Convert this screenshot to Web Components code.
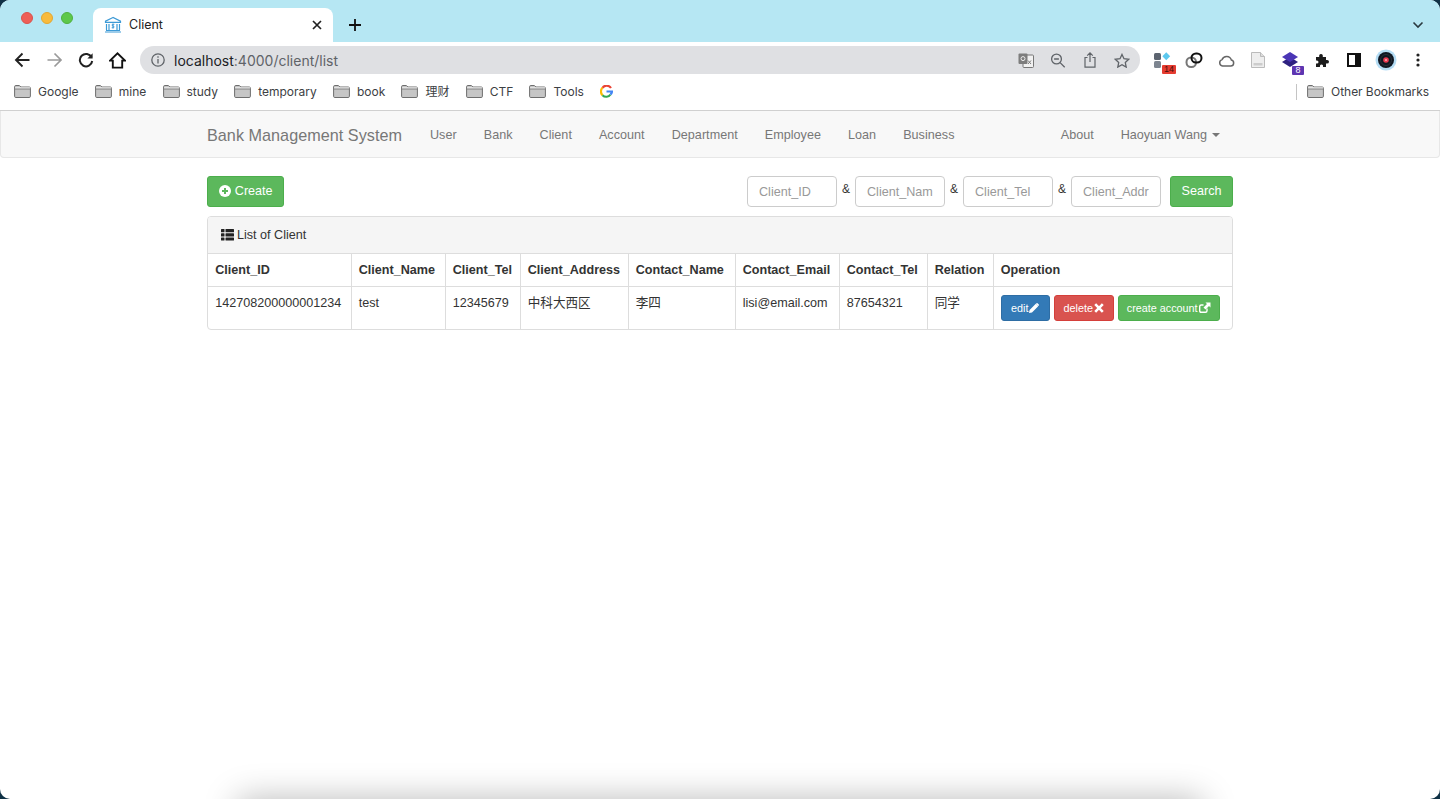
<!DOCTYPE html>
<html lang="en">
<head>
<meta charset="utf-8">
<title>Client</title>
<style>
    html, body { margin: 0; height: 100%; background: #0f3145; }
    body { font-family: "Liberation Sans", "Noto Sans CJK SC", sans-serif; overflow: hidden; }
    #window {
        position: relative;
        height: 799px;
        background: #fff;
        border-radius: 10px;
        overflow: hidden;
    }
    #shade {
        position: absolute;
        left: 238px;
        width: 964px;
        top: 799px;
        height: 40px;
        box-shadow: 0 0 34px rgba(0, 0, 0, .28);
    }
</style>
</head>
<body>
<div id="window">
    <browser-tabs></browser-tabs>
    <browser-toolbar></browser-toolbar>
    <browser-bookmarks></browser-bookmarks>
    <bank-navbar></bank-navbar>
    <client-page>
        <client-filter></client-filter>
        <client-panel></client-panel>
    </client-page>
    <div id="shade"></div>
</div>
<script>
    function html(strings, ...values) {
        return String.raw({ raw: strings }, ...values);
    }

    function createTemplate(s) {
        const template = document.createElement("template");
        template.innerHTML = s;
        return template;
    }

    class BaseElement extends HTMLElement {
        static template = createTemplate("");

        constructor() {
            super();
            const root = this.attachShadow({ mode: "open" });
            root.appendChild(this.constructor.template.content.cloneNode(true));
        }
    }

    const chromeFont = `Inter, "Noto Sans CJK SC", sans-serif`;

    const folderIcon = html`<svg width="17" height="13" viewBox="0 0 17 13"><path d="M.6 1.700q0-1.200 1.200-1.200h3.600l1.500 1.500h8.300q1.200 0 1.200 1.200v8.100q0 1.200-1.200 1.200H1.800q-1.200 0-1.200-1.200z" fill="#c6c6c6" stroke="#6e6e6e"/><path d="M1 3.900h15" stroke="#6e6e6e" fill="none"/><path d="M1 2.900h15" stroke="#f4f4f4" fill="none"/></svg>`;

    // ***** BROWSER CHROME *****

    class BrowserTabs extends BaseElement {
        static template = createTemplate(html`
        <style>
            :host {
                display: flex;
                align-items: flex-end;
                height: 42px;
                background: #b6e7f3;
                position: relative;
                font: 12.500px ${chromeFont};
                color: #222;
            }
            #lights { display: flex; gap: 8px; padding: 0 0 18px 21px; width: 72px; box-sizing: border-box; }
            #lights i { width: 12px; height: 12px; border-radius: 50%; box-sizing: border-box; flex: none; }
            #tab {
                display: flex;
                align-items: center;
                width: 240px;
                height: 34px;
                background: #fff;
                border-radius: 8px 8px 0 0;
                margin-left: 21px;
                padding: 0 10px 0 11px;
                box-sizing: border-box;
            }
            #tab svg:first-child { margin-right: 7px; }
            #title { flex: 1; position: relative; top: -1px; }
            #plus { margin: 0 0 10px 15px; }
            #more { position: absolute; right: 16px; top: 21px; }
        </style>
        <div id="lights">
            <i style="background:#ee5f57;border:1px solid #d9534c"></i>
            <i style="background:#f9bb3c;border:1px solid #e3a731"></i>
            <i style="background:#5ec84a;border:1px solid #50b03f"></i>
        </div>
        <div id="tab">
            <svg width="18" height="18" viewBox="0 0 18 18" fill="none" stroke="#3d9ad6" stroke-width="1.200"><path d="M9 1.500 1.500 5.200v1.200h15V5.200zM2.500 8v6M15.500 8v6M5 8v6M13 8v6M1 16h16M2 14.500h14"/><path d="M10.400 8.300H8.300v1.700h1.500v1.700H7.700M9 7.600v5" stroke-width=".9"/></svg>
            <span id="title">Client</span>
            <svg width="12" height="12" viewBox="0 0 12 12" stroke="#222" stroke-width="1.700"><path d="M2 2l8 8M10 2l-8 8"/></svg>
        </div>
        <svg id="plus" width="14" height="14" viewBox="0 0 14 14" stroke="#111" stroke-width="1.800"><path d="M7 1v12M1 7h12"/></svg>
        <svg id="more" width="12" height="8" viewBox="0 0 12 8" fill="none" stroke="#2a3a40" stroke-width="1.600"><path d="M1.500 1.500 6 6l4.500-4.500"/></svg>
        `);
    }
    customElements.define("browser-tabs", BrowserTabs);

    class BrowserToolbar extends BaseElement {
        static template = createTemplate(html`
        <style>
            :host {
                display: flex;
                align-items: center;
                height: 34px;
                background: #fff;
                box-sizing: border-box;
                padding: 2px 0 0 14px;
            }
            #nav { display: flex; align-items: center; gap: 15px; width: 126px; flex: none; }
            #omni {
                display: flex;
                align-items: center;
                width: 1000px;
                flex: none;
                height: 28px;
                background: #dfe0e3;
                border-radius: 14px;
                padding: 0 10px 0 11px;
                box-sizing: border-box;
                font: 14px ${chromeFont};
                color: #5f6368;
            }
            #url { flex: 1; margin-left: 9px; }
            #url b { font-weight: normal; color: #202124; }
            #omni-icons { display: flex; align-items: center; gap: 16px; }
            #omni-icons svg { width: 16px; }
            #ext { display: flex; align-items: center; margin-left: 6px; }
            .slot { width: 32px; display: flex; justify-content: center; position: relative; }
            .badge {
                position: absolute;
                font: 9px/9px "Liberation Sans", sans-serif;
                text-align: center;
                border-radius: 1px;
            }
        </style>
        <div id="nav">
            <svg width="17" height="16" viewBox="0 0 17 16" fill="none" stroke="#222" stroke-width="1.900"><path d="M15.500 8H2M8.500 1.500 2 8l6.500 6.500"/></svg>
            <svg width="17" height="16" viewBox="0 0 17 16" fill="none" stroke="#9a9a9a" stroke-width="1.700"><path d="M1.500 8H15M8.500 1.500 15 8l-6.500 6.500"/></svg>
            <svg width="16" height="16" viewBox="0 0 16 16" fill="none" stroke="#222" stroke-width="2"><path d="M13.600 5.400A6.200 6.200 0 1 0 14.200 9"/><path d="M14.600 1.200v5.200H9.400z" fill="#222" stroke="none"/></svg>
            <svg width="17" height="17" viewBox="0 0 17 17" fill="#fff" stroke="#111" stroke-width="1.900"><path d="M1 8.600 8.500 1.400 16 8.600h-2.800v7H3.800v-7z"/></svg>
        </div>
        <div id="omni">
            <svg width="14" height="14" viewBox="0 0 14 14" fill="none" stroke="#5f6368" stroke-width="1.300"><circle cx="7" cy="7" r="6.200"/><path d="M7 6v4.400M7 3.200v1.500"/></svg>
            <span id="url"><b>localhost</b>:4000/client/list</span>
            <div id="omni-icons">
                <svg height="15" viewBox="0 0 16 15"><rect x="5" y="2" width="10.500" height="12.500" rx="1" fill="#f1f1f1" stroke="#777"/><rect x=".5" y=".5" width="9" height="10.500" rx="1" fill="#7d7d7d"/><circle cx="5" cy="5.600" r="2" fill="none" stroke="#eee"/><path d="M10 7.500l3 3.500M13 7.500l-3 3.500" stroke="#777"/></svg>
                <svg height="15" viewBox="0 0 15 15" fill="none" stroke="#5f6368" stroke-width="1.300"><circle cx="6" cy="6" r="4.900"/><path d="M3.600 6h4.800M9.600 9.600l4.600 4.600"/></svg>
                <svg height="16" viewBox="0 0 14 16" fill="none" stroke="#5f6368" stroke-width="1.200"><path d="M4.500 5.500H2v9.700h10V5.500H9.500M7 10V1M4.200 3.600 7 .9l2.800 2.700"/></svg>
                <svg height="15" viewBox="0 0 16 15" fill="none" stroke="#5f6368" stroke-width="1.300"><path d="m8 1.400 2 4.300 4.700.6-3.400 3.200.9 4.600L8 11.800l-4.200 2.300.9-4.600L1.300 6.300 6 5.700z"/></svg>
            </div>
        </div>
        <div id="ext">
            <div class="slot">
                <svg width="20" height="20" viewBox="0 0 20 20"><rect x="2" y="3" width="7" height="7" rx="1.500" fill="#5c6470"/><rect x="2" y="11" width="7" height="7" rx="1.500" fill="#7d8590"/><rect x="11.500" y="3.500" width="5.500" height="5.500" transform="rotate(45 14.250 6.250)" fill="#5cc8ee"/></svg>
                <span class="badge" style="left:16px;top:15px;width:14px;background:#e53b30;color:#4a0f0a">14</span>
            </div>
            <div class="slot">
                <svg width="18" height="16" viewBox="0 0 18 16" fill="none" stroke-width="2"><rect x="1.500" y="5.500" width="9.500" height="9.500" rx="4.500" stroke="#777"/><rect x="6.500" y="1.500" width="10" height="9" rx="4.500" stroke="#111"/></svg>
            </div>
            <div class="slot">
                <svg width="17" height="13" viewBox="0 0 17 13" fill="none" stroke="#666" stroke-width="1.500"><path d="M4.500 12h8.300a3 3 0 0 0 .6-5.900A5 5 0 0 0 4 5.600 3.300 3.300 0 0 0 4.500 12z"/></svg>
            </div>
            <div class="slot">
                <svg width="14" height="16" viewBox="0 0 14 16"><path d="M.5.500h9l4 4v11H.5z" fill="#eee" stroke="#bbb"/><path d="M2.500 11h9v2.500h-9z" fill="#ccc"/><path d="M9.500.500v4h4" fill="#ddd" stroke="#bbb"/></svg>
            </div>
            <div class="slot">
                <svg width="16" height="16" viewBox="0 0 16 16"><path d="M8 5l8 5-8 5-8-5z" fill="#2e2180"/><path d="M8 0l8 5-8 5-8-5z" fill="#4a35b5"/></svg>
                <span class="badge" style="left:18px;top:14px;width:12px;background:#5e35b1;color:#fff">8</span>
            </div>
            <div class="slot">
                <svg width="15" height="15" viewBox="0 0 15 15"><path d="M1 4h3.200Q3.800 1 6 1t1.800 3h3.200v3q3-.6 3 1.700T11 10.500V14H8q.5-2.500-1.500-2.500T5 14H1v-3.500q2.500.5 2.500-1.500T1 7.500z" fill="#1c1c1c"/></svg>
            </div>
            <div class="slot">
                <svg width="14" height="14" viewBox="0 0 14 14"><rect x="1" y="1" width="12" height="12" fill="#fff" stroke="#111" stroke-width="2"/><rect x="8" y="1" width="5" height="12" fill="#111"/></svg>
            </div>
            <div class="slot">
                <svg width="22" height="22" viewBox="0 0 22 22"><circle cx="11" cy="11" r="10.500" fill="#b5ddf5"/><circle cx="11" cy="11" r="8" fill="#0f1722"/><circle cx="11" cy="11" r="5.500" fill="none" stroke="#39404c" stroke-width=".6"/><circle cx="11" cy="11" r="2.800" fill="#e8384f"/><circle cx="11" cy="11" r=".8" fill="#fff"/></svg>
            </div>
            <div class="slot">
                <svg width="4" height="14" viewBox="0 0 4 14" fill="#222"><circle cx="2" cy="2" r="1.600"/><circle cx="2" cy="7" r="1.600"/><circle cx="2" cy="12" r="1.600"/></svg>
            </div>
        </div>
        `);
    }
    customElements.define("browser-toolbar", BrowserToolbar);

    class BrowserBookmarks extends BaseElement {
        static template = createTemplate(html`
        <style>
            :host {
                display: flex;
                align-items: center;
                height: 35px;
                background: #fff;
                border-bottom: 1px solid #d0d0d0;
                box-sizing: border-box;
                padding: 0 0 3px 14px;
                font: 12px/16px ${chromeFont};
                color: #3c4043;
            }
            .mark { display: flex; align-items: center; gap: 7px; margin-right: 16.200px; white-space: nowrap; }
            #spacer { flex: 1; }
            #sep { width: 1px; height: 16px; background: #c4c4c4; margin-right: 10px; }
            #other { margin-right: 11px; letter-spacing: -.06px; }
        </style>
        ${["Google", "mine", "study", "temporary", "book", "理财", "CTF", "Tools"].map(t => `<span class="mark">${folderIcon}${t}</span>`).join("")}
        <svg width="13" height="13" viewBox="0 0 13 13" fill="none" stroke-width="2.200">
            <path d="M11 3A5.200 5.200 0 0 0 2.500 2.800" stroke="#ea4335"/>
            <path d="M2.500 2.800a5.200 5.200 0 0 0 0 7.400" stroke="#fbbc05"/>
            <path d="M2.500 10.200a5.200 5.200 0 0 0 8 -.7" stroke="#34a853"/>
            <path d="M6.500 6.500h5.500a5.200 5.200 0 0 1-1.500 3" stroke="#4285f4"/>
        </svg>
        <span id="spacer"></span>
        <span id="sep"></span>
        <span class="mark" id="other">${folderIcon}Other Bookmarks</span>
        `);
    }
    customElements.define("browser-bookmarks", BrowserBookmarks);

    // ***** APP *****

    class BankNavbar extends BaseElement {
        static template = createTemplate(html`
        <style>
            :host {
                display: block;
                height: 47px;
                background: #f8f8f8;
                border: solid #e7e7e7;
                border-width: 0 1px 1px;
                border-radius: 0 0 4px 4px;
                box-sizing: border-box;
                font-size: 12.600px;
                line-height: 18px;
                color: #777;
            }
            #bar { display: flex; align-items: center; width: 1026px; height: 46px; padding-top: 2px; box-sizing: border-box; margin-left: 206px; }
            #brand { font-size: 16.200px; width: 223px; flex: none; letter-spacing: .03px; }
            nav { display: flex; gap: 27px; letter-spacing: .03px; }
            #right { display: flex; gap: 27px; margin-left: auto; margin-right: 13px; align-items: center; }
            #caret { display: inline-block; border: 4px solid transparent; border-top-color: #777; border-bottom: 0; margin: 0 0 2px 5px; vertical-align: middle; }
        </style>
        <div id="bar">
            <span id="brand">Bank Management System</span>
            <nav>
                <span>User</span><span>Bank</span><span>Client</span><span>Account</span>
                <span>Department</span><span>Employee</span><span>Loan</span><span>Business</span>
            </nav>
            <div id="right"><span>About</span><span>Haoyuan Wang<i id="caret"></i></span></div>
        </div>
        `);
    }
    customElements.define("bank-navbar", BankNavbar);

    class ClientPage extends BaseElement {
        static template = createTemplate(html`
        <style>
            :host {
                display: flex;
                flex-direction: column;
                gap: 9px;
                width: 1026px;
                margin: 18px 0 0 207px;
                font-size: 12.600px;
                color: #333;
            }
        </style>
        <slot></slot>
        `);
    }
    customElements.define("client-page", ClientPage);

    class BsButton extends BaseElement {
        static template = createTemplate(html`
        <style>
            :host {
                display: inline-flex;
                align-items: center;
                justify-content: center;
                height: var(--h, 31px);
                padding: 0 var(--px, 10.800px);
                box-sizing: border-box;
                background: #5cb85c;
                border: 1px solid #4cae4c;
                border-radius: 3px;
                color: #fff;
                font-size: var(--fs, 12.600px);
                white-space: nowrap;
            }
            :host([kind="blue"]) { background: #337ab7; border-color: #2e6da4; }
            :host([kind="red"]) { background: #d9534f; border-color: #d43f3a; }
        </style>
        <slot></slot>
        `);
    }
    customElements.define("bs-button", BsButton);

    class ClientFilter extends BaseElement {
        static template = createTemplate(html`
        <style>
            :host { display: flex; align-items: center; height: 31px; }
            #create svg { margin-right: 4px; position: relative; top: -1px; }
            #spacer { flex: 1; }
            .field {
                width: 90px;
                height: 31px;
                box-sizing: border-box;
                border: 1px solid #ccc;
                border-radius: 4px;
                padding: 0 11px;
                color: #999;
                font-size: 12.600px;
                line-height: 31px;
                overflow: hidden;
                white-space: nowrap;
            }
            .amp { width: 18px; text-align: center; font-size: 12px; position: relative; top: -3px; color: #333; }
            #search { margin-left: 9px; width: 63px; padding: 0; }
            bs-button span { position: relative; top: -1px; }
        </style>
        <bs-button id="create">
            <svg width="12" height="12" viewBox="0 0 12 12"><circle cx="6" cy="6" r="6" fill="#fff"/><path d="M6 3v6M3 6h6" stroke="#5cb85c" stroke-width="2"/></svg>
            <span>Create</span>
        </bs-button>
        <span id="spacer"></span>
        <div class="field">Client_ID</div><span class="amp">&amp;</span>
        <div class="field">Client_Nam</div><span class="amp">&amp;</span>
        <div class="field">Client_Tel</div><span class="amp">&amp;</span>
        <div class="field">Client_Addr</div>
        <bs-button id="search"><span>Search</span></bs-button>
        `);
    }
    customElements.define("client-filter", ClientFilter);

    class ClientPanel extends BaseElement {
        static template = createTemplate(html`
        <style>
            :host {
                display: block;
                border: 1px solid #ddd;
                border-radius: 4px;
                overflow: hidden;
            }
            #head {
                display: flex;
                align-items: center;
                gap: 3px;
                padding: 0 13px;
                background: #f5f5f5;
                border-bottom: 1px solid #ddd;
                box-sizing: border-box;
                height: 37px;
            }
            table { border-collapse: collapse; table-layout: fixed; width: 1024px; line-height: 18px; }
            th, td {
                border-left: 1px solid #ddd;
                padding: 0 0 0 7.200px;
                text-align: left;
                white-space: nowrap;
                overflow: hidden;
            }
            th:first-child, td:first-child { border-left: 0; }
            th { height: 32px; border-bottom: 1px solid #ddd; box-sizing: border-box; }
            td { height: 43px; vertical-align: top; padding-top: 7px; box-sizing: border-box; }
            #ops { display: flex; gap: 4px; --h: 26px; --px: 0; --fs: 10.800px; }
            td.op { padding-top: 8px; }
            bs-button svg { margin-left: 1px; }
        </style>
        <div id="head">
            <svg width="13" height="12" viewBox="0 0 13 12" fill="#222"><rect x="0" y="0" width="3.500" height="3.200" rx=".5"/><rect x="4.500" y="0" width="8.500" height="3.200" rx=".5"/><rect x="0" y="4.200" width="3.500" height="3.200" rx=".5"/><rect x="4.500" y="4.200" width="8.500" height="3.200" rx=".5"/><rect x="0" y="8.400" width="3.500" height="3.200" rx=".5"/><rect x="4.500" y="8.400" width="8.500" height="3.200" rx=".5"/></svg>
            <span>List of Client</span>
        </div>
        <table>
            <colgroup>
                <col style="width:143px"><col style="width:94px"><col style="width:75px"><col style="width:108px">
                <col style="width:107px"><col style="width:104px"><col style="width:88px"><col style="width:66px"><col>
            </colgroup>
            <thead>
                <tr>
                    <th>Client_ID</th><th>Client_Name</th><th>Client_Tel</th><th>Client_Address</th>
                    <th>Contact_Name</th><th>Contact_Email</th><th>Contact_Tel</th><th>Relation</th><th>Operation</th>
                </tr>
            </thead>
            <tbody>
                <tr>
                    <td>142708200000001234</td><td>test</td><td>12345679</td><td>中科大西区</td>
                    <td>李四</td><td>lisi@email.com</td><td>87654321</td><td>同学</td>
                    <td class="op">
                        <div id="ops">
                            <bs-button kind="blue" style="width:49px">edit<svg width="10" height="10" viewBox="0 0 10 10" fill="#fff"><path d="M0 10l.6-3L6.800.8l2.400 2.400L3 9.400zM7.500.2q.5-.4 1 0l1.300 1.300q.4.5 0 1L9.200 3 7 .8z"/></svg></bs-button>
                            <bs-button kind="red" style="width:60px">delete<svg width="10" height="10" viewBox="0 0 10 10" stroke="#fff" stroke-width="2.600"><path d="M1.200 1.200l7.600 7.600M8.800 1.200 1.200 8.800"/></svg></bs-button>
                            <bs-button style="width:102px">create account<svg width="12" height="11" viewBox="0 0 12 11" fill="none" stroke="#fff" stroke-width="1.400"><path d="M8 6.500v2.300q0 1.500-1.500 1.500H2.200Q.7 10.300.7 8.800V4.500Q.7 3 2.200 3H4.500"/><path d="M6.500 .5H11.500V5.500L10 4 6.500 7.500 4.500 5.500 8 2z" fill="#fff" stroke="none"/></svg></bs-button>
                        </div>
                    </td>
                </tr>
            </tbody>
        </table>
        `);
    }
    customElements.define("client-panel", ClientPanel);
</script>
</body>
</html>
